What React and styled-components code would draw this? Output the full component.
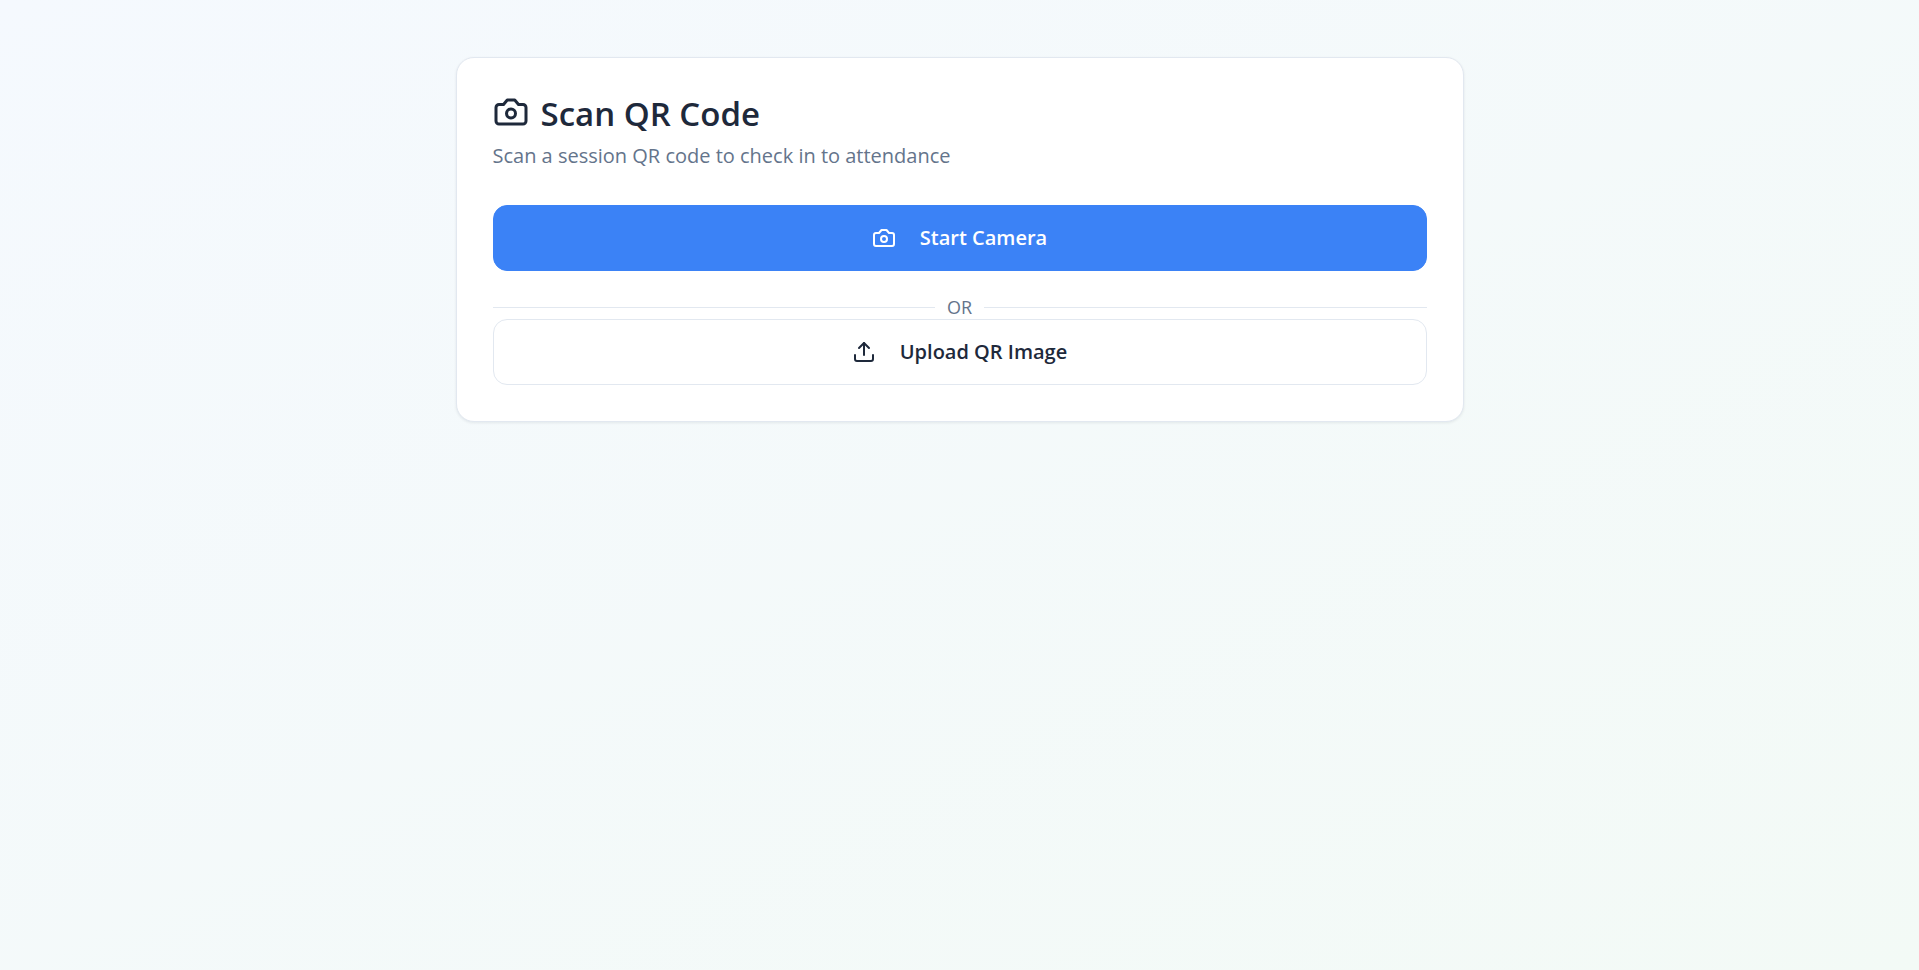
import React, { useRef } from "react";
import styled, { createGlobalStyle, css } from "styled-components";
import { Upload } from "lucide-react";

const GlobalStyle = createGlobalStyle`
  *, *::before, *::after { box-sizing: border-box; }
  body {
    margin: 0;
    color: #1e293b;
    font-family: "Segoe UI", "Open Sans", "Noto Sans", sans-serif;
    font-size: 18px;
  }
`;

const Page = styled.main`
  min-height: 100vh;
  padding: 57px 36px;
  background: linear-gradient(to bottom right, #f5f9fe, #f3faf6);
`;

const Card = styled.section`
  max-width: 1008px;
  margin: 0 auto;
  padding: 36px;
  background: #ffffff;
  border: 1px solid #e2e8f0;
  border-radius: 18px;
  box-shadow: 0 1px 3px rgba(15, 23, 42, 0.08);
`;

const CardHeader = styled.header`
  display: flex;
  flex-direction: column;
  gap: 8px;
  margin-bottom: 35px;
`;

const Title = styled.h1`
  display: flex;
  align-items: center;
  gap: 12px;
  margin: 0;
  font-size: 33px;
  font-weight: 600;
  line-height: 40px;

  svg {
    align-self: flex-start;
  }
`;

const Description = styled.p`
  margin: 0;
  color: #64748b;
  font-size: 20px;
  line-height: 28px;
`;

const Button = styled.button`
  display: flex;
  align-items: center;
  justify-content: center;
  gap: 24px;
  width: 100%;
  height: 66px;
  padding: 0 36px;
  border: 1px solid #e2e8f0;
  border-radius: 14px;
  background: #ffffff;
  color: #1e293b;
  font-family: inherit;
  font-size: 20px;
  font-weight: 600;
  line-height: 28px;
  cursor: pointer;
  ${({ $primary }) =>
    $primary &&
    css`
      border-color: #3b82f6;
      background: #3b82f6;
      color: #ffffff;
    `}
`;

const Divider = styled.div`
  display: flex;
  align-items: center;
  gap: 12px;
  margin-top: 24px;
  color: #64748b;
  font-size: 18px;
  line-height: 24px;

  &::before,
  &::after {
    content: "";
    flex: 1;
    height: 1px;
    background: #e2e8f0;
  }
`;

function CameraIcon({ size }) {
  return (
    <svg
      width={size}
      height={size}
      viewBox="0 0 24 24"
      fill="none"
      stroke="currentColor"
      strokeWidth="2"
      strokeLinecap="round"
      strokeLinejoin="round"
      aria-hidden="true"
    >
      <path d="M14.5 4h-5L7 7H4a2 2 0 0 0-2 2v9a2 2 0 0 0 2 2h16a2 2 0 0 0 2-2V9a2 2 0 0 0-2-2h-3l-2.5-3z" />
      <circle cx="12" cy="13" r="3" />
    </svg>
  );
}

export default function App() {
  const fileInput = useRef(null);

  return (
    <>
      <GlobalStyle />
      <Page>
        <Card aria-labelledby="scan-title">
          <CardHeader>
            <Title id="scan-title">
              <CameraIcon size={36} />
              Scan QR Code
            </Title>
            <Description>Scan a session QR code to check in to attendance</Description>
          </CardHeader>
          <Button type="button" $primary>
            <CameraIcon size={24} />
            Start Camera
          </Button>
          <Divider>OR</Divider>
          <input ref={fileInput} type="file" accept="image/*" aria-label="QR image" hidden />
          <Button type="button" onClick={() => fileInput.current.click()}>
            <Upload size={24} aria-hidden="true" />
            Upload QR Image
          </Button>
        </Card>
      </Page>
    </>
  );
}
